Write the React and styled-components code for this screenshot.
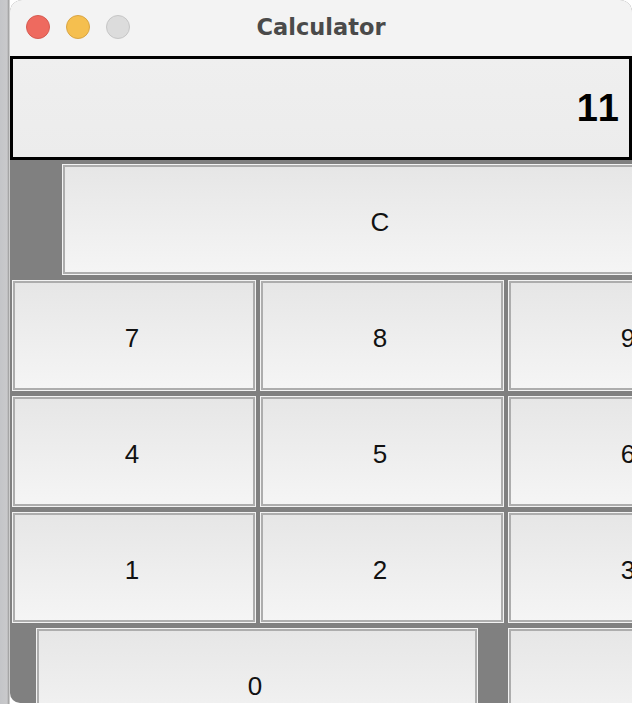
import { createGlobalStyle, styled } from 'styled-components';

const GlobalStyle = createGlobalStyle`
  html, body {
    margin: 0;
    height: 100%;
    overflow: hidden;
  }
  body {
    background: linear-gradient(to right, #c4c5c8 0, #c9c9cb 7px, #9a9a9a 9px, #ffffff 10px);
    font-family: "Liberation Sans", Arial, sans-serif;
  }
`;

const rows = [
  ['7', '8', '9'],
  ['4', '5', '6'],
  ['1', '2', '3'],
];

const App = () => {
  return (
    <>
      <GlobalStyle />
      <Window>
        <TitleBar>
          <Lights>
            <Light $color="#ee6a5f" $edge="#d65b51" />
            <Light $color="#f5bf4f" $edge="#d9a544" />
            <Light $color="#dcdcdc" $edge="#c6c6c6" />
          </Lights>
          <Title>Calculator</Title>
        </TitleBar>
        <Display>11</Display>
        <Keys>
          <Row $indent={52}>
            <Key $w={640}>C</Key>
          </Row>
          {rows.map((row) => (
            <Row key={row[0]} $indent={2}>
              {row.map((k) => (
                <Key key={k} $w={244}>
                  {k}
                </Key>
              ))}
            </Row>
          ))}
          <Row $indent={26} $gap={30}>
            <Key $w={442}>0</Key>
            <Key $w={244} />
          </Row>
        </Keys>
      </Window>
    </>
  );
};

const Window = styled.div`
  margin-left: 10px;
  width: 622px;
  height: 703px;
  background: #808080;
  border-radius: 12px 12px 0 10px;
  overflow: hidden;
  display: flex;
  flex-direction: column;
`;

const TitleBar = styled.div`
  height: 56px;
  flex-shrink: 0;
  background: #f3f3f3;
  display: grid;
  grid-template-columns: 1fr auto 1fr;
  align-items: center;
  padding-bottom: 1px;
  box-sizing: border-box;
`;

const Lights = styled.div`
  display: flex;
  gap: 16px;
  padding-left: 16px;
  padding-bottom: 1px;
`;

const Light = styled.span`
  width: 24px;
  height: 24px;
  border-radius: 50%;
  box-sizing: border-box;
  background: ${(p) => p.$color};
  border: 1px solid ${(p) => p.$edge};
`;

const Title = styled.div`
  font-family: "DejaVu Sans", sans-serif;
  font-weight: bold;
  font-size: 22.5px;
  color: #4a4a4a;
  padding-bottom: 1px;
`;

const Display = styled.div`
  height: 104px;
  flex-shrink: 0;
  box-sizing: border-box;
  border: 3px solid #000;
  background: linear-gradient(to bottom, #efefef, #ececec);
  display: flex;
  align-items: center;
  justify-content: flex-end;
  padding-right: 10px;
  font-weight: bold;
  font-size: 38px;
  font-kerning: none;
  color: #000;
`;

const Keys = styled.div`
  display: flex;
  flex-direction: column;
  gap: 5px;
  padding-top: 4px;
`;

const Row = styled.div`
  display: flex;
  gap: ${(p) => p.$gap ?? 4}px;
  padding-left: ${(p) => p.$indent}px;
`;

const Key = styled.div`
  flex-shrink: 0;
  width: ${(p) => p.$w}px;
  height: 111px;
  box-sizing: border-box;
  border: 1px solid #f3f3f3;
  box-shadow: inset 0 0 0 2px #adadad;
  background: linear-gradient(to bottom, #e6e6e6, #f5f5f5);
  display: flex;
  align-items: center;
  justify-content: center;
  padding: 6px 4px 0 0;
  font-size: 26px;
  color: #111;
`;

export default App;
